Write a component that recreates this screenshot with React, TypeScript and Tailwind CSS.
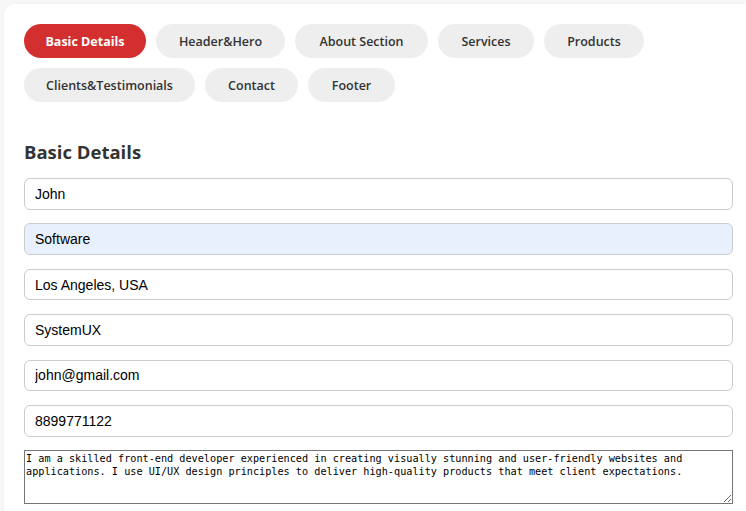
import React from "react";

const tabs = [
  { label: "Basic Details", w: "w-[122px]" },
  { label: "Header&Hero", w: "w-[129px]" },
  { label: "About Section", w: "w-[133px]" },
  { label: "Services", w: "w-[96px]" },
  { label: "Products", w: "w-[100px]" },
  { label: "Clients&Testimonials", w: "w-[171px]" },
  { label: "Contact", w: "w-[93px]" },
  { label: "Footer", w: "w-[87px]" },
];

const fields = [
  { value: "John", filled: false },
  { value: "Software", filled: true },
  { value: "Los Angeles, USA", filled: false },
  { value: "SystemUX", filled: false },
  { value: "john@gmail.com", filled: false },
  { value: "8899771122", filled: false },
];

const about =
  "I am a skilled front-end developer experienced in creating visually stunning and user-friendly websites and applications. I use UI/UX design principles to deliver high-quality products that meet client expectations.";

export default function App() {
  return (
    <div className="h-[511px] w-[746px] overflow-hidden bg-[#f8f8f8] pl-1 pt-1">
      <div className="w-[749px] min-h-[600px] rounded-[10px] bg-white p-5 shadow-[0_0_6px_rgba(0,0,0,0.04)]">
        <div className="flex flex-wrap gap-[10px] font-['Open_Sans',sans-serif] text-[12.5px] font-semibold">
          {tabs.map((t, i) => (
            <button
              key={t.label}
              className={`flex h-[34px] items-center justify-center rounded-full pt-[2px] ${t.w} ${
                i === 0 ? "bg-[#d32f2f] font-bold text-white" : "bg-[#eeeeee] text-[#333333]"
              }`}
            >
              {t.label}
            </button>
          ))}
        </div>

        <h2 className="mt-[36px] mb-[13px] font-['Open_Sans',sans-serif] text-[18.5px] font-bold leading-[27px] text-[#333333]">
          Basic Details
        </h2>

        <div className="flex flex-col gap-[13.8px]">
          {fields.map((f) => (
            <input
              key={f.value}
              defaultValue={f.value}
              className={`h-[31.6px] w-full rounded-[6px] border border-[#cccccc] px-[10px] font-['Liberation_Sans',Arial,sans-serif] text-[14px] text-black outline-none ${
                f.filled ? "bg-[#e8f0fe]" : "bg-white"
              }`}
            />
          ))}
          <textarea
            defaultValue={about}
            className="block h-[54px] w-full resize-y border border-[#767676] px-[1px] pt-[1px] pb-0 font-['DejaVu_Sans_Mono',monospace] text-[10.2px] leading-[13px] text-black"
          />
        </div>
      </div>
    </div>
  );
}
